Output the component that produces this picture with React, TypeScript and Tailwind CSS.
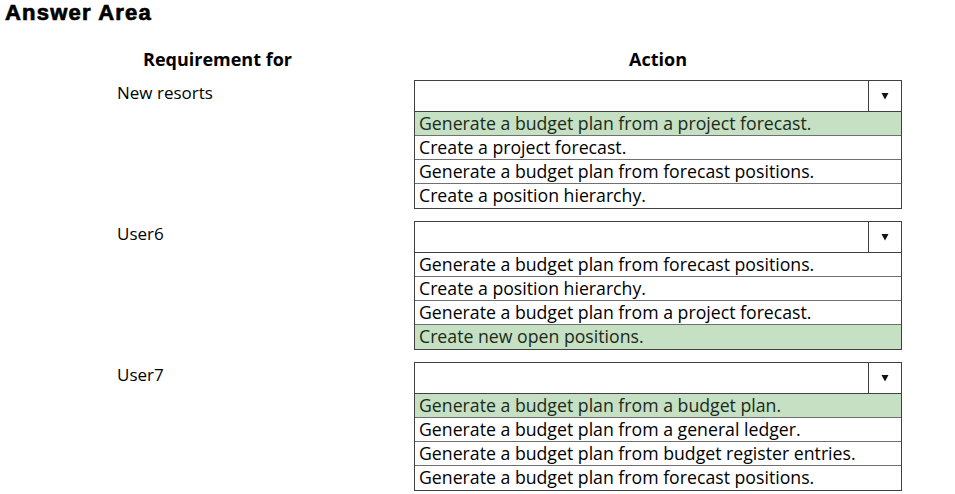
import React from "react";

const groups = [
  {
    label: "New resorts",
    options: [
      "Generate a budget plan from a project forecast.",
      "Create a project forecast.",
      "Generate a budget plan from forecast positions.",
      "Create a position hierarchy.",
    ],
    selected: 0,
  },
  {
    label: "User6",
    options: [
      "Generate a budget plan from forecast positions.",
      "Create a position hierarchy.",
      "Generate a budget plan from a project forecast.",
      "Create new open positions.",
    ],
    selected: 3,
  },
  {
    label: "User7",
    options: [
      "Generate a budget plan from a budget plan.",
      "Generate a budget plan from a general ledger.",
      "Generate a budget plan from budget register entries.",
      "Generate a budget plan from forecast positions.",
    ],
    selected: 0,
  },
];

const body = { fontFamily: '"Open Sans", "Noto Sans", sans-serif' };

export default function App() {
  return (
    <div className="w-[955px] h-[494px] bg-white text-black overflow-hidden" style={body}>
      <div
        className="pl-[5px] h-[30px] text-[22px] font-extrabold leading-[26px] tracking-[1.2px] [-webkit-text-stroke:0.7px_black]"
        style={{ fontFamily: '"Liberation Sans", Arial, sans-serif' }}
      >
        Answer Area
      </div>
      <div className="flex h-[50px] items-center pt-[8px] text-[18px] font-bold">
        <div className="w-[414px] pl-[143px]">Requirement for</div>
        <div className="w-[488px] text-center">Action</div>
      </div>
      <div className="flex flex-col gap-[12px]">
        {groups.map((g) => (
          <div key={g.label} className="flex">
            <div className="w-[414px] pl-[117px] text-[17px] leading-[24px] pt-[1px]">{g.label}</div>
            <div className="w-[488px] border border-[#404040]">
              <div className="flex h-[31px] border-b border-[#404040]">
                <div className="flex-1" />
                <div className="w-[33px] border-l border-[#404040] flex items-center justify-center">
                  <svg width="8" height="8" viewBox="0 0 8 8">
                    <polygon points="0.5,1 7.5,1 4,7.5" fill="#111" />
                  </svg>
                </div>
              </div>
              {g.options.map((o, i) => (
                <div
                  key={o}
                  className={`h-[24px] pl-[4px] text-[17.7px] leading-[23px] whitespace-nowrap ${
                    i < g.options.length - 1 ? "border-b border-[#707070]" : ""
                  } ${i === g.selected ? "bg-[#c5e0c2] text-[#1c2a1c]" : ""}`}
                >
                  {o}
                </div>
              ))}
            </div>
          </div>
        ))}
      </div>
    </div>
  );
}
